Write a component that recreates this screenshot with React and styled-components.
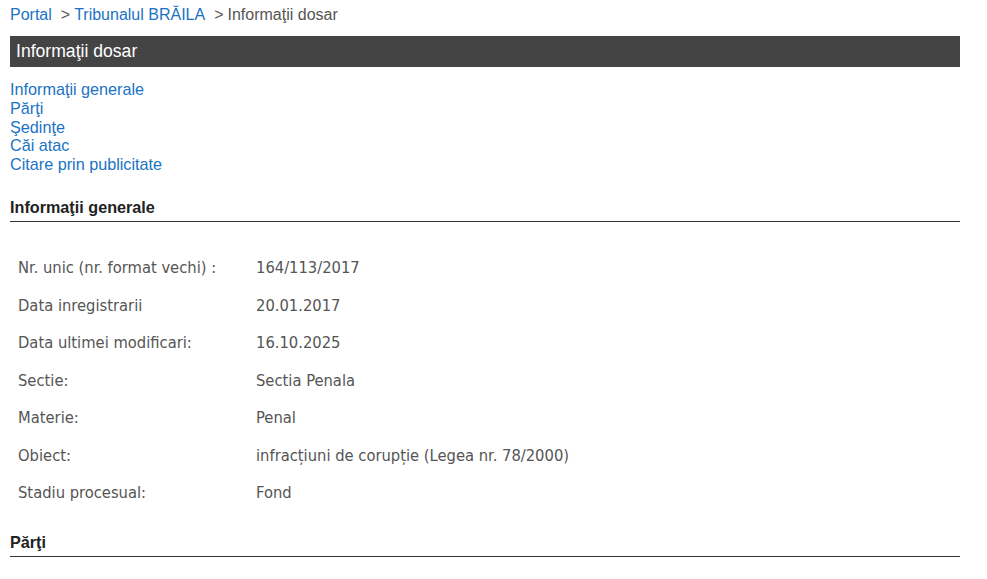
import React from "react";
import styled, { createGlobalStyle } from "styled-components";

const Global = createGlobalStyle`
  html, body { margin: 0; padding: 0; background: #fff; }
  body { font-family: Arial, "Liberation Sans", sans-serif; font-size: 16px; }
`;

const Page = styled.div`
  width: 950px;
  padding: 0 0 0 10px;
`;

const Breadcrumb = styled.nav`
  display: flex;
  align-items: baseline;
  padding-top: 6px;
  height: 36px;
  box-sizing: border-box;
  font-size: 16px;
  line-height: 18px;
  color: #555;
`;

const Crumb = styled.a`
  color: ${(p) => (p.$current ? "#555" : "#1a73c4")};
  text-decoration: none;
`;

const Sep = styled.span`
  color: #555;
  margin: 0 4px 0 9px;
`;

const TitleBar = styled.div`
  background: #444444;
  height: 31px;
  display: flex;
  align-items: center;
  padding-left: 6px;
  color: #fff;
  font-size: 17.6px;
`;

const LinkList = styled.ul`
  list-style: none;
  margin: 13px 0 0;
  padding: 0;
  font-size: 16.2px;
  line-height: 18.75px;
`;

const NavLink = styled.a`
  color: #1a73c4;
  text-decoration: none;
`;

const SectionTitle = styled.h2`
  margin: ${(p) => p.$mt}px 0 0;
  font-size: 16.2px;
  font-weight: bold;
  color: #222;
  line-height: 18px;
  padding-bottom: 5px;
  border-bottom: 1px solid #333;
`;

const InfoTable = styled.table`
  border-collapse: collapse;
  margin-top: 27px;
  font-family: "DejaVu Sans Condensed", "DejaVu Sans", sans-serif;
  font-size: 16.4px;
  color: #555;
`;

const Row = styled.tr`
  height: 37.5px;
`;

const Label = styled.td`
  width: 222px;
  padding: 0 8px;
  vertical-align: middle;
  white-space: nowrap;
`;

const Value = styled.td`
  padding: 0 8px 0 8px;
  vertical-align: middle;
`;

const rows = [
  ["Nr. unic (nr. format vechi) :", "164/113/2017"],
  ["Data inregistrarii", "20.01.2017"],
  ["Data ultimei modificari:", "16.10.2025"],
  ["Sectie:", "Sectia Penala"],
  ["Materie:", "Penal"],
  ["Obiect:", "infracțiuni de corupție (Legea nr. 78/2000)"],
  ["Stadiu procesual:", "Fond"],
];

export default function App() {
  return (
    <Page>
      <Global />
      <Breadcrumb>
        <Crumb href="#">Portal</Crumb>
        <Sep>&gt;</Sep>
        <Crumb href="#">Tribunalul BRĂILA</Crumb>
        <Sep>&gt;</Sep>
        <Crumb $current>Informaţii dosar</Crumb>
      </Breadcrumb>
      <TitleBar>Informaţii dosar</TitleBar>
      <LinkList>
        {["Informaţii generale", "Părţi", "Şedinţe", "Căi atac", "Citare prin publicitate"].map((t) => (
          <li key={t}>
            <NavLink href="#">{t}</NavLink>
          </li>
        ))}
      </LinkList>
      <SectionTitle $mt={24}>Informaţii generale</SectionTitle>
      <InfoTable>
        <tbody>
          {rows.map(([l, v]) => (
            <Row key={l}>
              <Label>{l}</Label>
              <Value>{v}</Value>
            </Row>
          ))}
        </tbody>
      </InfoTable>
      <SectionTitle $mt={22}>Părţi</SectionTitle>
    </Page>
  );
}
